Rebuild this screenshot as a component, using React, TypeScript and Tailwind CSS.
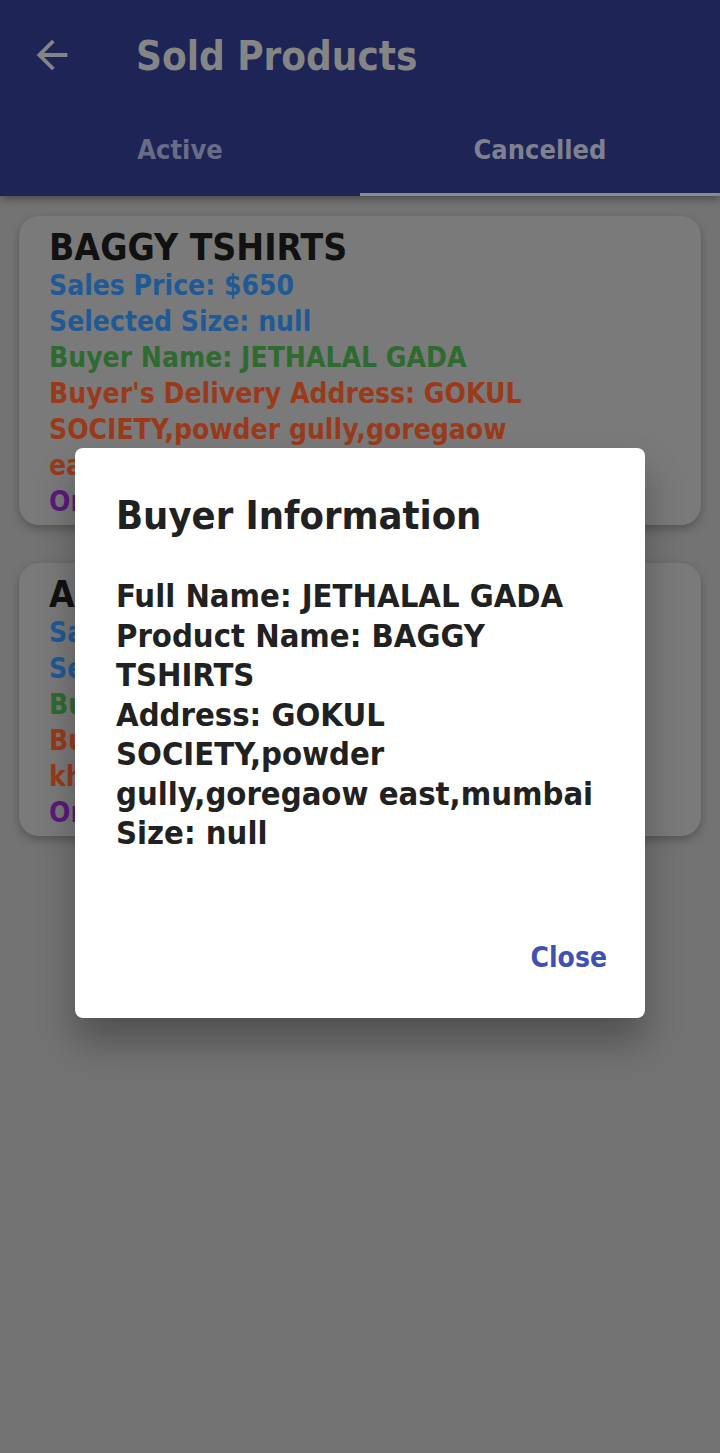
import React from "react";

const font = { fontFamily: '"DejaVu Sans Condensed", "DejaVu Sans", sans-serif' };

type Sale = {
  name: string;
  price: string;
  size: string;
  buyer: string;
  address: string;
  status: string;
};

const sales: Sale[] = [
  {
    name: "BAGGY TSHIRTS",
    price: "$650",
    size: "null",
    buyer: "JETHALAL GADA",
    address: "GOKUL SOCIETY,powder gully,goregaow east,mumbai",
    status: "Cancelled",
  },
  {
    name: "ADIDAS SHOES",
    price: "$1200",
    size: "9",
    buyer: "BABITA IYER",
    address: "SHANTI khardanda road,mumbai",
    status: "Cancelled",
  },
];

function BackArrow() {
  return (
    <svg width="46" height="46" viewBox="0 0 24 24" fill="#858585">
      <path d="M20 11H7.83l5.59-5.59L12 4l-8 8 8 8 1.41-1.41L7.83 13H20v-2z" />
    </svg>
  );
}

function SaleCard({ sale }: { sale: Sale }) {
  return (
    <div className="rounded-[20px] bg-[#7a7a7a] pl-[30px] pr-[30px] pt-3 pb-[5px] shadow-[0_4px_10px_rgba(0,0,0,0.25)]">
      <div className="text-[37px] leading-[40px] font-bold text-[#111111]">{sale.name}</div>
      <div className="text-[28px] leading-[36px] font-bold">
        <div className="text-[#1f5a96]">Sales Price: {sale.price}</div>
        <div className="text-[#1f5a96]">Selected Size: {sale.size}</div>
        <div className="text-[#2e6b30]">Buyer Name: {sale.buyer}</div>
        <div className="text-[#9a3a1a]">Buyer's Delivery Address: {sale.address}</div>
        <div className="text-[#5a1a7a]">Order Status: {sale.status}</div>
      </div>
    </div>
  );
}

export default function App() {
  const [tab, setTab] = React.useState(1);
  const [open, setOpen] = React.useState(true);
  const picked = sales[0];

  return (
    <div className="relative min-h-[1453px] bg-[#737373] overflow-hidden font-stretch-condensed" style={font}>
      {/* App bar with tabs */}
      <header className="bg-[#1e2556] shadow-[0_3px_8px_rgba(0,0,0,0.35)] relative z-10">
        <div className="h-[112px] flex items-center">
          <button className="ml-[29px] mt-[-2px]">
            <BackArrow />
          </button>
          <h1 className="ml-[61px] text-[40px] font-bold text-[#858585]">Sold Products</h1>
        </div>
        <div className="flex">
          {["Active", "Cancelled"].map((t, i) => (
            <button
              key={t}
              onClick={() => setTab(i)}
              className={
                "flex-1 h-[84px] pb-[5px] flex items-center justify-center text-[27px] font-bold border-b-[3px] " +
                (tab === i ? "border-[#8a8a8a] text-[#7f8190]" : "border-transparent text-[#686c86]")
              }
            >
              {t}
            </button>
          ))}
        </div>
      </header>

      {/* Sold product cards */}
      <main className="px-[19px] pt-5 flex flex-col gap-[38px]">
        {sales.map((s) => (
          <SaleCard key={s.name} sale={s} />
        ))}
      </main>

      {/* Buyer information dialog */}
      {open && (
        <div className="absolute inset-0 z-20 flex justify-center items-start pt-[448px]">
          <div className="w-[570px] bg-white rounded-[8px] pl-[41px] pr-[38px] pt-[41px] pb-[42px] shadow-[0_24px_38px_rgba(0,0,0,0.3)]">
            <h2 className="text-[39.5px] leading-[52px] font-bold text-[#212121]">Buyer Information</h2>
            <div className="mt-[36px] text-[32.5px] leading-[39.5px] font-bold text-[#212121]">
              <div>Full Name: {picked.buyer}</div>
              <div>Product Name: {picked.name}</div>
              <div>Address: {picked.address}</div>
              <div>Size: {picked.size}</div>
            </div>
            <div className="mt-[86px] flex justify-end">
              <button onClick={() => setOpen(false)} className="text-[28px] leading-[36px] font-bold text-[#3f51b5]">
                Close
              </button>
            </div>
          </div>
        </div>
      )}
    </div>
  );
}
